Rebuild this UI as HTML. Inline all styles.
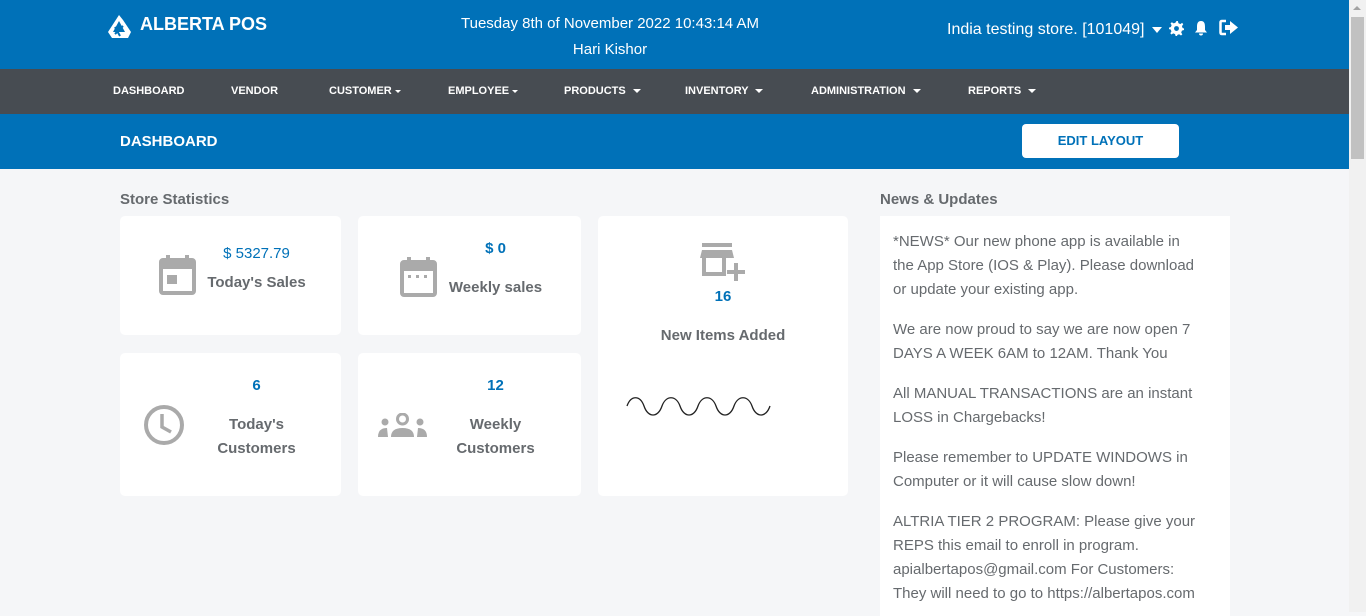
<!DOCTYPE html>
<html><head><style>
*{margin:0;padding:0;box-sizing:border-box}
body{width:1366px;height:612px;overflow:hidden;background:#f5f6f8;font-family:"Liberation Sans",sans-serif;position:relative}
.top{position:absolute;left:0;top:0;width:1349px;height:69px;background:#0071b8;color:#fff}
.nav{position:absolute;left:0;top:69px;width:1349px;height:45px;background:#474c52;color:#fff;font-size:11px;font-weight:bold}
.nav span{position:absolute;top:16px}
.sub{position:absolute;left:0;top:114px;width:1349px;height:55px;background:#0071b8;color:#fff}
.card{position:absolute;background:#fff;border-radius:5px}
.num{position:absolute;color:#0071b8;font-weight:bold;font-size:15px;text-align:center}
.lab{position:absolute;color:#666a6e;font-weight:bold;font-size:15px;text-align:center;line-height:24px}
.sb{position:absolute;left:1349px;top:0;width:17px;height:612px;background:#f1f1f1}
.news{position:absolute;left:880px;top:216px;width:350px;height:400px;background:#fff;color:#666a6e;font-size:15px;line-height:24px;padding:14px 26px 0 13px}
.news p{margin-bottom:16px}
.car{display:inline-block;width:0;height:0;border-left:4px solid transparent;border-right:4px solid transparent;border-top:4px solid #fff;vertical-align:middle;margin-left:4px}
</style></head><body>
<div class="top">
 <svg style="position:absolute;left:106px;top:14px" width="26" height="25" viewBox="0 0 26 25"><path d="M13 1 L2 18 L6 24 L22 24 L25 18 L17 6 Z M13 7 L19 18 L7 18 Z" fill="#fff" fill-rule="evenodd"/><path d="M9 13 L14 22 M17 12 L9 20" stroke="#0071b8" stroke-width="2"/></svg>
 <div style="position:absolute;left:140px;top:14px;font-size:18px;font-weight:bold">ALBERTA POS</div>
 <div style="position:absolute;left:410px;top:11px;width:400px;text-align:center;font-size:15px;line-height:26px">Tuesday 8th of November 2022 10:43:14 AM<br>Hari Kishor</div>
 <div style="position:absolute;left:947px;top:21px;font-size:16px">India testing store. [101049]<span class="car" style="border-width:6px 5px 0 5px;margin-left:8px"></span></div>
 <svg style="position:absolute;left:1169px;top:21px" width="15" height="15" viewBox="0 0 16 16"><path d="M8 0 L9.5 0 L10 2.3 L12 3.3 L14 2 L15.2 3.4 L13.8 5.4 L14.5 7.4 L16 8 L16 9.6 L13.8 10.2 L13 12.2 L14.2 14.2 L12.8 15.4 L10.8 14.1 L9 14.8 L8.5 16 L7 16 L6.5 14 L4.5 13.2 L2.6 14.4 L1.4 13 L2.6 11 L1.8 9 L0 8.6 L0 7 L2 6.4 L2.8 4.4 L1.6 2.6 L3 1.3 L5 2.5 L6.8 1.8 Z" fill="#fff"/><circle cx="8" cy="8" r="2.6" fill="#0071b8"/></svg>
 <svg style="position:absolute;left:1193px;top:20px" width="16" height="16" viewBox="0 0 16 16"><path d="M8 1 C4.5 1 4 4 4 7 L4 10 L2 12.5 L14 12.5 L12 10 L12 7 C12 4 11.5 1 8 1Z M6 13.5 A2 2 0 0 0 10 13.5Z" fill="#fff"/></svg>
 <svg style="position:absolute;left:1219px;top:19px" width="20" height="17" viewBox="0 0 20 17"><path d="M7 2 L3 2 Q1.5 2 1.5 3.5 L1.5 13.5 Q1.5 15 3 15 L7 15" stroke="#fff" stroke-width="2.5" fill="none"/><path d="M6 6 L11 6 L11 2 L19 8.5 L11 15 L11 11 L6 11Z" fill="#fff"/></svg>
</div>
<div class="nav">
 <span style="left:113px">DASHBOARD</span><span style="left:231px">VENDOR</span><span style="left:329px">CUSTOMER<i class="car" style="border-width:3px 3px 0 3px;margin-left:3px"></i></span>
 <span style="left:448px">EMPLOYEE<i class="car" style="border-width:3px 3px 0 3px;margin-left:3px"></i></span>
 <span style="left:564px">PRODUCTS <i class="car"></i></span><span style="left:685px">INVENTORY <i class="car"></i></span>
 <span style="left:811px">ADMINISTRATION <i class="car"></i></span><span style="left:968px">REPORTS <i class="car"></i></span>
</div>
<div class="sub">
 <div style="position:absolute;left:120px;top:19px;font-size:15px;font-weight:bold">DASHBOARD</div>
 <div style="position:absolute;left:1022px;top:10px;width:157px;height:34px;background:#fff;border-radius:4px;color:#0071b8;font-weight:bold;font-size:13px;text-align:center;line-height:34px">EDIT LAYOUT</div>
</div>
<div style="position:absolute;left:120px;top:191px;font-size:15px;color:#666a6e;font-weight:bold">Store Statistics</div>
<div style="position:absolute;left:880px;top:191px;font-size:15px;color:#666a6e;font-weight:bold">News &amp; Updates</div>

<div class="card" style="left:120px;top:216px;width:221px;height:119px">
 <svg style="position:absolute;left:39px;top:39px" width="37" height="40" viewBox="0 0 37 40"><rect x="2" y="5" width="33" height="33" rx="2" fill="none" stroke="#aaa" stroke-width="4"/><rect x="2" y="5" width="33" height="9" fill="#aaa"/><rect x="7" y="0" width="4" height="6" fill="#aaa"/><rect x="26" y="0" width="4" height="6" fill="#aaa"/><rect x="8" y="20" width="10" height="9" fill="#aaa"/></svg>
 <div class="num" style="left:80px;top:29px;width:113px;font-weight:normal">$ 5327.79</div>
 <div class="lab" style="left:80px;top:55px;width:113px">Today's Sales</div>
</div>
<div class="card" style="left:358px;top:216px;width:223px;height:119px">
 <svg style="position:absolute;left:42px;top:41px" width="37" height="40" viewBox="0 0 37 40"><rect x="2" y="5" width="33" height="33" rx="2" fill="none" stroke="#aaa" stroke-width="4"/><rect x="2" y="5" width="33" height="9" fill="#aaa"/><rect x="7" y="0" width="4" height="6" fill="#aaa"/><rect x="26" y="0" width="4" height="6" fill="#aaa"/><rect x="8" y="18" width="3" height="3" fill="#aaa"/><rect x="16" y="18" width="3" height="3" fill="#aaa"/><rect x="24" y="18" width="3" height="3" fill="#aaa"/></svg>
 <div class="num" style="left:80px;top:24px;width:115px">$ 0</div>
 <div class="lab" style="left:80px;top:60px;width:115px">Weekly sales</div>
</div>
<div class="card" style="left:598px;top:216px;width:250px;height:280px">
 <svg style="position:absolute;left:102px;top:27px" width="46" height="38" viewBox="0 0 46 38"><rect x="2" y="0" width="30" height="4" fill="#aaa"/><path d="M2 7 L32 7 L34 15 L0 15 Z" fill="#aaa"/><path d="M4 15 L4 31 L24 31 L24 15" stroke="#aaa" stroke-width="4" fill="none"/><rect x="34" y="20" width="4" height="18" fill="#aaa"/><rect x="27" y="27" width="18" height="4" fill="#aaa"/></svg>
 <div class="num" style="left:0;top:72px;width:250px">16</div>
 <div class="lab" style="left:0;top:108px;width:250px">New Items Added</div>
 <svg style="position:absolute;left:28px;top:180px" width="147" height="24" viewBox="0 0 147 24"><path d="M1 10 C5 -1 14 -1 18 10 C22 22 32 22 36 10 C40 -1 50 -1 54 10 C58 22 68 22 72 10 C76 -1 86 -1 90 10 C94 22 104 22 108 10 C112 -1 122 -1 126 10 C130 22 140 22 144 10" stroke="#222" stroke-width="1.3" fill="none"/></svg>
</div>
<div class="card" style="left:120px;top:353px;width:221px;height:143px">
 <svg style="position:absolute;left:23px;top:51px" width="42" height="42" viewBox="0 0 42 42"><circle cx="21" cy="21" r="18" fill="none" stroke="#aaa" stroke-width="4"/><path d="M19 10 L19 23 L28 28" stroke="#aaa" stroke-width="3.5" fill="none"/></svg>
 <div class="num" style="left:80px;top:24px;width:113px">6</div>
 <div class="lab" style="left:80px;top:60px;width:113px">Today's<br>Customers</div>
</div>
<div class="card" style="left:358px;top:353px;width:223px;height:143px">
 <svg style="position:absolute;left:20px;top:60px" width="49" height="26" viewBox="0 0 49 26"><circle cx="24.5" cy="6" r="5" fill="none" stroke="#aaa" stroke-width="3"/><circle cx="7" cy="9" r="3.5" fill="#aaa"/><circle cx="42" cy="9" r="3.5" fill="#aaa"/><path d="M13 24 Q13 15 24.5 15 Q36 15 36 24Z" fill="#aaa"/><path d="M0 24 Q0 15 9 15 L10 24Z M49 24 Q49 15 40 15 L39 24Z" fill="#aaa"/></svg>
 <div class="num" style="left:80px;top:24px;width:115px">12</div>
 <div class="lab" style="left:80px;top:60px;width:115px">Weekly<br>Customers</div>
</div>
<div class="news">
 <p>*NEWS* Our new phone app is available in the App Store (IOS &amp; Play). Please download or update your existing app.</p>
 <p>We are now proud to say we are now open 7 DAYS A WEEK 6AM to 12AM. Thank You</p>
 <p>All MANUAL TRANSACTIONS are an instant LOSS in Chargebacks!</p>
 <p>Please remember to UPDATE WINDOWS in Computer or it will cause slow down!</p>
 <p>ALTRIA TIER 2 PROGRAM: Please give your REPS this email to enroll in program. apialbertapos@gmail.com For Customers: They will need to go to https://albertapos.com</p>
</div>
<div class="sb"><div style="position:absolute;left:2px;top:17px;width:13px;height:142px;background:#c1c1c1"></div><div style="position:absolute;left:4px;top:6px;border-left:4px solid transparent;border-right:4px solid transparent;border-bottom:4px solid #a3a3a3"></div></div>
</body></html>
